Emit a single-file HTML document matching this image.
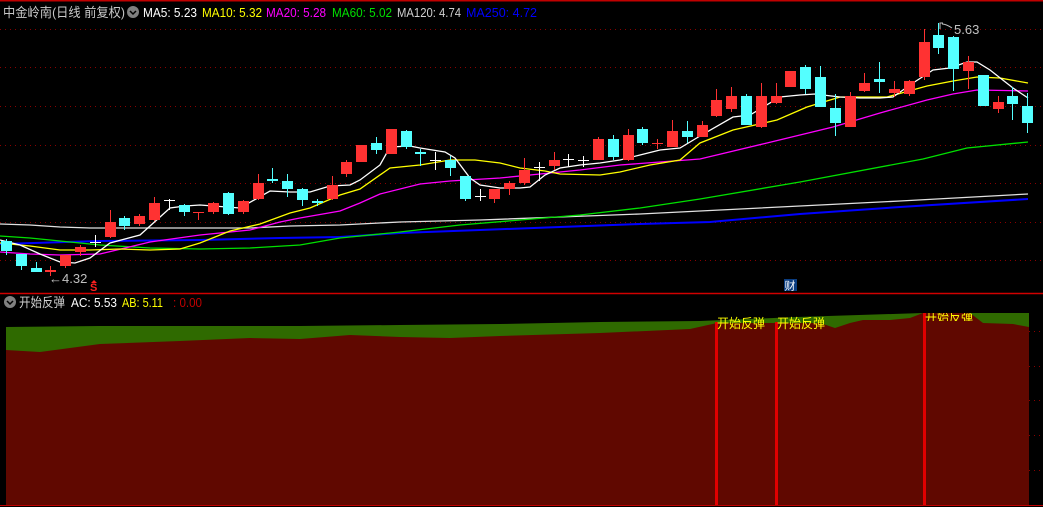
<!DOCTYPE html>
<html><head><meta charset="utf-8"><style>
html,body{margin:0;padding:0;background:#000;width:1043px;height:507px;overflow:hidden}
svg{display:block}
text{font-family:"Liberation Sans","Noto Sans CJK SC",sans-serif}
</style></head><body>
<svg id="s" width="1043" height="507" viewBox="0 0 1043 507" xmlns="http://www.w3.org/2000/svg">
<rect width="1043" height="507" fill="#000"/>
<line x1="0" y1="0.5" x2="1043" y2="0.5" stroke="#c00000" stroke-width="2"/>
<g stroke="#8a0000" stroke-width="1" stroke-dasharray="1,4">
<line x1="0" y1="29.5" x2="1043" y2="29.5"/><line x1="0" y1="67.5" x2="1043" y2="67.5"/>
<line x1="0" y1="106.5" x2="1043" y2="106.5"/><line x1="0" y1="145.5" x2="1043" y2="145.5"/>
<line x1="0" y1="183.5" x2="1043" y2="183.5"/><line x1="0" y1="222.5" x2="1043" y2="222.5"/>
<line x1="0" y1="260.5" x2="1043" y2="260.5"/>
<line x1="1029" y1="331.5" x2="1043" y2="331.5"/><line x1="1029" y1="366.5" x2="1043" y2="366.5"/>
<line x1="1029" y1="400.5" x2="1043" y2="400.5"/><line x1="1029" y1="435.5" x2="1043" y2="435.5"/>
<line x1="1029" y1="470.5" x2="1043" y2="470.5"/>
</g>
<line x1="0" y1="293.5" x2="1043" y2="293.5" stroke="#d00000" stroke-width="1.5"/>
<g id="mas" fill="none" stroke-width="1.3">
<polyline stroke="#e0e0e0" points="0,224 30,225 60,227 90,228 250,228 290,226 340,225 400,222 480,220 560,217 640,214 700,211 800,206 900,201 1028,194"/>
<polyline stroke="#0000ff" stroke-width="2" points="0,244 100,241 200,240 280,238 340,237 400,233 480,230 560,227 640,224 710,222 800,214 900,207 1028,199"/>
<polyline stroke="#00e000" points="0,236 30,238 60,241 100,245 150,248 200,249 250,248 300,245 340,238 400,232 460,225 520,220 580,215 640,208 700,199 800,182 923,159 967,148 1028,142"/>
<polyline stroke="#ff00ff" points="0,252 30,254 60,255 100,254 150,242 200,235 250,230 280,222 300,218 340,211 360,203 380,194 420,184 450,181 500,178 540,174 580,170 620,165 660,162 700,159 767,143 833,127 880,113 927,100 953,94 977,90 1028,91"/>
<polyline stroke="#ffff00" points="0,243 30,246 60,250 90,250 120,249 150,250 180,249 200,243 230,231 260,224 290,213 310,208 340,195 360,189 390,168 420,165 450,160 475,160 500,163 520,168 545,171 560,174 600,175 620,172 650,165 680,160 700,143 733,130 777,120 807,107 840,97 887,97 927,86 953,81 977,77 1000,78 1028,83"/>
<polyline stroke="#ffffff" points="0,240 20,245 40,254 60,262 75,263 90,258 110,243 140,235 170,208 185,206 200,205 240,208 270,191 290,192 310,192 330,186 350,185 360,180 380,165 390,147 410,146 420,148 445,152 455,158 470,178 480,185 500,188 520,188 530,187 545,175 560,168 580,165 600,163 620,160 640,155 660,150 680,148 700,136 733,117 750,115 780,97 800,95 815,94 823,95 840,97 860,98 880,98 893,97 913,83 933,70 950,68 967,62 977,62 990,70 1013,88 1028,98"/>
</g>
<g id="cdl"></g>
<text x="3" y="17" font-size="13" fill="#c8c8c8" textLength="122" lengthAdjust="spacingAndGlyphs">中金岭南(日线 前复权)</text>
<circle cx="133" cy="12" r="6" fill="#808080"/><path d="M130 11 l3 3 l3 -3" stroke="#000" stroke-width="1.5" fill="none"/>
<text x="143" y="17" font-size="13" fill="#ffffff" textLength="54" lengthAdjust="spacingAndGlyphs">MA5: 5.23</text>
<text x="202" y="17" font-size="13" fill="#ffff00" textLength="60" lengthAdjust="spacingAndGlyphs">MA10: 5.32</text>
<text x="266" y="17" font-size="13" fill="#ff00ff" textLength="60" lengthAdjust="spacingAndGlyphs">MA20: 5.28</text>
<text x="332" y="17" font-size="13" fill="#00e000" textLength="60" lengthAdjust="spacingAndGlyphs">MA60: 5.02</text>
<text x="397" y="17" font-size="13" fill="#d0d0d0" textLength="64" lengthAdjust="spacingAndGlyphs">MA120: 4.74</text>
<text x="466" y="17" font-size="13" fill="#0000ff" textLength="71" lengthAdjust="spacingAndGlyphs">MA250: 4.72</text>
<path d="M940 29 v-6 h3 M942 24 q4 0 10 4" stroke="#c0c0c0" fill="none"/>
<text x="954" y="34" font-size="13" fill="#c0c0c0">5.63</text>
<text x="49" y="283" font-size="13" fill="#c0c0c0">←4.32</text>
<path d="M91 283 l3 -3 l3 3 z" fill="#ff2020"/>
<text x="90" y="291" font-size="11" font-weight="bold" fill="#ff2020">S</text>
<rect x="784" y="279" width="13" height="12" fill="#0a3c80"/>
<text x="784.5" y="289.5" font-size="11" fill="#fff">财</text>
<polygon fill="#2f6a00" points="6,327 100,326 300,326 400,325 500,324 600,322 700,321 797,317 923,313 1029,313 1029,505 6,505"/>
<polygon fill="#600800" points="6,350 40,352 100,344 180,341 250,338 300,339 350,335 400,337 450,338 500,336 600,333 690,329 717,323 767,323 820,323 835,328 850,323 863,320 890,320 910,318 923,313 970,313 983,323 1013,324 1029,327 1029,505 6,505"/>
<rect x="715" y="322" width="3" height="183" fill="#e00000"/>
<rect x="775" y="322" width="3" height="183" fill="#e00000"/>
<rect x="923" y="313" width="3" height="192" fill="#e00000"/>
<text x="717" y="328" font-size="13" fill="#ffff00" textLength="48" lengthAdjust="spacingAndGlyphs">开始反弹</text>
<text x="777" y="328" font-size="13" fill="#ffff00" textLength="48" lengthAdjust="spacingAndGlyphs">开始反弹</text>
<svg x="925" y="313" width="60" height="8"><text x="0" y="9" font-size="13" fill="#ffff00" textLength="48" lengthAdjust="spacingAndGlyphs">开始反弹</text></svg>
<line x1="0" y1="505.5" x2="1043" y2="505.5" stroke="#c00000"/>
<circle cx="10" cy="302" r="6" fill="#808080"/><path d="M7 301 l3 3 l3 -3" stroke="#000" stroke-width="1.5" fill="none"/>
<text x="19" y="307" font-size="13" fill="#d0d0d0" textLength="46" lengthAdjust="spacingAndGlyphs">开始反弹</text>
<text x="71" y="307" font-size="13" fill="#ffffff" textLength="46" lengthAdjust="spacingAndGlyphs">AC: 5.53</text>
<text x="122" y="307" font-size="13" fill="#ffff00" textLength="41" lengthAdjust="spacingAndGlyphs">AB: 5.11</text>
<text x="173" y="307" font-size="13" fill="#c00000" textLength="29" lengthAdjust="spacingAndGlyphs">: 0.00</text>
</svg>
<script>
var D=[
['c',241,251,239,255],['c',254,266,254,270],['c',268,272,262,272],['r',270,272,266,276],['r',255,266,255,268],
['r',247,252,245,256],['w',242,242,235,247],['r',222,237,210,238],['c',218,226,216,230],['r',216,224,214,226],
['r',203,220,197,221],['w',200,200,199,210],['c',205,212,204,216],['r',212,213,212,220],['r',203,212,202,214],
['c',193,214,192,215],['r',201,212,200,214],['r',183,199,174,200],['c',179,181,168,183],['c',181,189,174,197],
['c',189,200,188,206],['c',201,203,199,206],['r',185,199,176,200],['r',162,174,160,177],['r',145,162,145,162],
['c',143,150,137,154],['r',129,154,129,154],['c',131,147,130,149],['c',152,154,149,166],['w',160,160,152,170],
['c',160,168,156,176],['c',176,199,176,201],['w',196,196,189,201],['r',189,199,189,203],['r',183,189,181,195],
['r',170,183,158,185],['w',167,167,162,181],['r',160,166,152,170],['w',159,159,154,167],['w',160,160,156,167],
['r',139,160,137,160],['c',139,157,135,160],['r',135,160,129,161],['c',129,143,127,145],['r',143,144,139,149],
['r',131,147,120,147],['c',131,137,121,143],['r',125,137,121,137],['r',100,116,89,117],['r',96,109,87,112],
['c',96,125,94,125],['r',96,127,83,128],['r',96,103,83,104],['r',71,87,71,87],['c',67,89,65,94],
['c',77,107,66,107],['c',108,123,94,136],['r',96,127,92,127],['r',83,91,73,92],['c',79,82,62,93],
['r',89,93,81,97],['r',81,94,80,96],['r',42,77,29,80],['c',35,48,23,54],['c',37,69,36,91],
['r',62,71,56,89],['c',75,106,75,106],['r',102,109,96,113],['c',96,104,87,120],['c',106,123,93,133]];
var g=document.getElementById('cdl'),h='';
D.forEach(function(d,i){var x=Math.round(6+i*14.8);var col=d[0]=='r'?'#ff3232':d[0]=='c'?'#54ffff':'#ffffff';
h+='<line x1="'+(x+0.5)+'" y1="'+d[3]+'" x2="'+(x+0.5)+'" y2="'+d[4]+'" stroke="'+col+'" stroke-width="1"/>';
var hgt=Math.max(1,d[2]-d[1]);h+='<rect x="'+(x-5)+'" y="'+d[1]+'" width="11" height="'+hgt+'" fill="'+col+'"/>';});
g.innerHTML=h;
</script>
</body></html>
